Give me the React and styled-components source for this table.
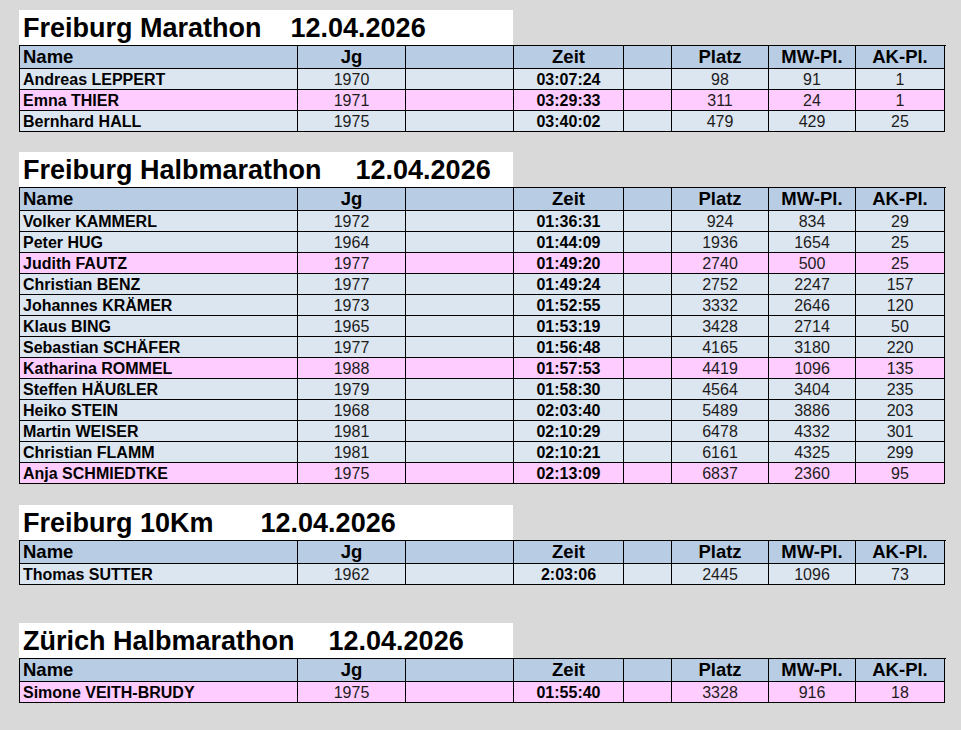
import React from "react";
import styled, { createGlobalStyle } from "styled-components";

const GlobalStyle = createGlobalStyle`
  html, body {
    margin: 0;
    padding: 0;
    background: #d9d9d9;
    font-family: "Liberation Sans", Arial, sans-serif;
  }
`;

const Page = styled.div`
  box-sizing: border-box;
  min-height: 730px;
  padding: 10px 0 0 19px;
  background: #d9d9d9;
`;

const Section = styled.section`
  margin-top: ${(p) => p.$top}px;
`;

const TitleBar = styled.div`
  box-sizing: border-box;
  width: 494px;
  height: 35px;
  background: #ffffff;
  display: flex;
  align-items: center;
  padding: 2px 0 0 4px;
  font-family: "Liberation Sans", Arial, sans-serif;
  font-weight: 700;
  font-size: 27px;
  color: #000;
  white-space: nowrap;
`;

const DateText = styled.span`
  margin-left: ${(p) => p.$gap}px;
`;

const Grid = styled.div`
  display: grid;
  grid-template-columns: 278px 108px 108px 110px 48px 97px 87px 89px;
  width: 926px;
  border-left: 1px solid #000;
  border-top: 1px solid #000;
`;

const bg = {
  head: "#b8cce4",
  row: "#dce6f1",
  pink: "#ffccff",
};

const Cell = styled.div`
  box-sizing: border-box;
  height: ${(p) => (p.$kind === "head" ? 23 : 21)}px;
  background: ${(p) => bg[p.$kind]};
  border-right: 1px solid #000;
  border-bottom: 1px solid #000;
  display: flex;
  align-items: center;
  justify-content: ${(p) => (p.$left ? "flex-start" : "center")};
  padding-left: ${(p) => (p.$left ? 3 : 0)}px;
  padding-top: 1px;
  font-size: ${(p) => (p.$kind === "head" ? 18.5 : 16)}px;
  font-weight: ${(p) => (p.$bold ? 700 : 400)};
  color: ${(p) => (p.$bold ? "#000" : "#1c1c1c")};
  line-height: 1;
  white-space: nowrap;
  overflow: hidden;
`;

const sections = [
  {
    title: "Freiburg Marathon",
    gap: 29,
    top: 0,
    rows: [
      ["Andreas LEPPERT", "1970", "03:07:24", "98", "91", "1"],
      ["Emna THIER", "1971", "03:29:33", "311", "24", "1", true],
      ["Bernhard HALL", "1975", "03:40:02", "479", "429", "25"],
    ],
  },
  {
    title: "Freiburg Halbmarathon",
    gap: 34,
    top: 20,
    rows: [
      ["Volker KAMMERL", "1972", "01:36:31", "924", "834", "29"],
      ["Peter HUG", "1964", "01:44:09", "1936", "1654", "25"],
      ["Judith FAUTZ", "1977", "01:49:20", "2740", "500", "25", true],
      ["Christian BENZ", "1977", "01:49:24", "2752", "2247", "157"],
      ["Johannes KRÄMER", "1973", "01:52:55", "3332", "2646", "120"],
      ["Klaus BING", "1965", "01:53:19", "3428", "2714", "50"],
      ["Sebastian SCHÄFER", "1977", "01:56:48", "4165", "3180", "220"],
      ["Katharina ROMMEL", "1988", "01:57:53", "4419", "1096", "135", true],
      ["Steffen HÄUßLER", "1979", "01:58:30", "4564", "3404", "235"],
      ["Heiko STEIN", "1968", "02:03:40", "5489", "3886", "203"],
      ["Martin WEISER", "1981", "02:10:29", "6478", "4332", "301"],
      ["Christian FLAMM", "1981", "02:10:21", "6161", "4325", "299"],
      ["Anja SCHMIEDTKE", "1975", "02:13:09", "6837", "2360", "95", true],
    ],
  },
  {
    title: "Freiburg 10Km",
    gap: 47,
    top: 21,
    rows: [["Thomas SUTTER", "1962", "2:03:06", "2445", "1096", "73"]],
  },
  {
    title: "Zürich Halbmarathon",
    gap: 34,
    top: 38,
    rows: [
      ["Simone VEITH-BRUDY", "1975", "01:55:40", "3328", "916", "18", true],
    ],
  },
];

function HeaderRow() {
  return (
    <>
      <Cell $kind="head" $left $bold>Name</Cell>
      <Cell $kind="head" $bold>Jg</Cell>
      <Cell $kind="head" />
      <Cell $kind="head" $bold>Zeit</Cell>
      <Cell $kind="head" />
      <Cell $kind="head" $bold>Platz</Cell>
      <Cell $kind="head" $bold>MW-Pl.</Cell>
      <Cell $kind="head" $bold>AK-Pl.</Cell>
    </>
  );
}

function DataRow({ row }) {
  const [name, jg, zeit, platz, mw, ak, pink] = row;
  const kind = pink ? "pink" : "row";
  return (
    <>
      <Cell $kind={kind} $left $bold>{name}</Cell>
      <Cell $kind={kind}>{jg}</Cell>
      <Cell $kind={kind} />
      <Cell $kind={kind} $bold>{zeit}</Cell>
      <Cell $kind={kind} />
      <Cell $kind={kind}>{platz}</Cell>
      <Cell $kind={kind}>{mw}</Cell>
      <Cell $kind={kind}>{ak}</Cell>
    </>
  );
}

export default function App() {
  return (
    <>
      <GlobalStyle />
      <Page>
        {sections.map((s) => (
          <Section key={s.title} $top={s.top}>
            <TitleBar>
              <span>{s.title}</span>
              <DateText $gap={s.gap}>12.04.2026</DateText>
            </TitleBar>
            <Grid>
              <HeaderRow />
              {s.rows.map((r) => (
                <DataRow key={r[0]} row={r} />
              ))}
            </Grid>
          </Section>
        ))}
      </Page>
    </>
  );
}
